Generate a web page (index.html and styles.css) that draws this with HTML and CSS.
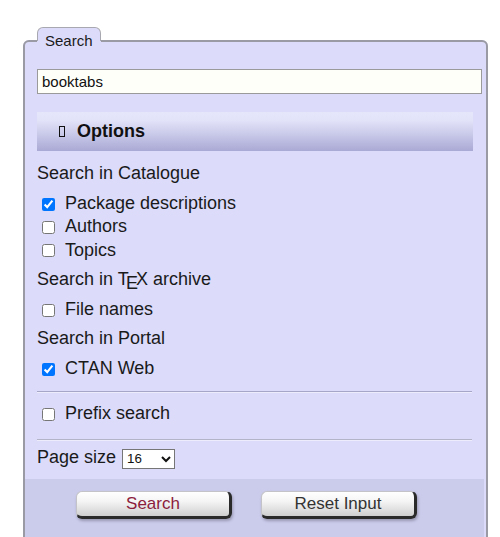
FILE: index.html
```html
<!DOCTYPE html>
<html lang="en">
<head>
    <meta charset="UTF-8">
    <meta name="viewport" content="width=device-width, initial-scale=1.0">
    <title>Search | CTAN</title>
    <link rel="stylesheet" href="styles.css">
</head>
<body>
    <form class="search-form">
        <fieldset class="search-box">
            <legend>Search</legend>

            <input type="text" class="query" name="q" value="booktabs">

            <div class="options-bar"><span class="options-icon"></span>Options</div>

            <div class="heading">Search in Catalogue</div>
            <div class="group">
                <label class="row"><input type="checkbox" name="ext" checked>Package descriptions</label>
                <label class="row"><input type="checkbox" name="aut">Authors</label>
                <label class="row"><input type="checkbox" name="top">Topics</label>
            </div>

            <div class="heading">Search in <span class="tex">T<span class="tex-e">E</span>X</span> archive</div>
            <div class="group">
                <label class="row"><input type="checkbox" name="fil">File names</label>
            </div>

            <div class="heading">Search in Portal</div>
            <div class="group">
                <label class="row"><input type="checkbox" name="por" checked>CTAN Web</label>
            </div>

            <hr class="sep">

            <div class="group">
                <label class="row"><input type="checkbox" name="prefix">Prefix search</label>
            </div>

            <hr class="sep sep-last">

            <div class="page-size">
                Page size
                <select name="max">
                    <option>8</option>
                    <option selected>16</option>
                    <option>32</option>
                    <option>64</option>
                </select>
            </div>

            <div class="buttons">
                <button type="submit" class="btn btn-search">Search</button>
                <button type="reset" class="btn">Reset Input</button>
            </div>
        </fieldset>
    </form>
</body>
</html>
```

FILE: styles.css
```css
body {
    margin: 0;
    font-family: 'Liberation Sans', Arial, sans-serif;
    color: #1a1a1a;
    background: #fff;
}

.search-form {
    margin: 0;
}

.search-box {
    box-sizing: border-box;
    width: 465px;
    min-width: 0;
    margin: 27px 0 0 23px;
    padding: 14px 4px 0 12px;
    border: 2px solid #9a9aa4;
    border-radius: 6px;
    background: #dcdcfa;
}

.search-box legend {
    padding: 4px 7px 6px;
    font-size: 15px;
    line-height: 17px;
    border: 1px solid transparent;
    border-bottom: 0;
    border-radius: 6px 6px 0 0;
    background:
        linear-gradient(#dcdcfa, #dcdcfa) padding-box,
        linear-gradient(to bottom, #a8a8b0 50%, transparent 50%) border-box;
}

.query {
    display: block;
    box-sizing: border-box;
    width: 100%;
    height: 25px;
    margin: 0;
    padding: 0 4px;
    border: 1px solid #9a9a9a;
    background: #fffffa;
    font-family: inherit;
    font-size: 15px;
    color: #111;
}

.options-bar {
    display: flex;
    align-items: center;
    gap: 12px;
    height: 39px;
    margin: 18px 9px 11px 0;
    padding-left: 22px;
    font-size: 18px;
    font-weight: bold;
    color: #111;
    background: linear-gradient(to bottom, #e6e6fb 0%, #e2e2f9 22%, #d2d2ef 45%, #a9a9d5 100%);
}

.options-icon {
    box-sizing: border-box;
    width: 6px;
    height: 11px;
    border: 1.5px solid #111;
}

.heading {
    font-size: 18px;
    line-height: 23.4px;
    margin-bottom: 6.5px;
}

.group {
    margin-bottom: 6px;
}

.row {
    display: block;
    font-size: 18px;
    line-height: 23.4px;
}

.row input {
    width: 13px;
    height: 13px;
    margin: 0 10px 0 5px;
    vertical-align: middle;
}

.tex-e {
    vertical-align: -0.22em;
    line-height: 0;
    margin: 0 -0.12em 0 -0.15em;
}

.sep {
    height: 0;
    margin: 10px 10px 9.3px 0;
    border: 0;
    border-top: 1px solid #a6a6c8;
    border-bottom: 1px solid #ececfc;
}

.sep-last {
    margin: 14px 10px 4.7px 0;
    border-top-color: #b4b4c8;
}

.page-size {
    font-size: 18px;
    line-height: 23.4px;
}

.page-size select {
    width: 53px;
    height: 20px;
    margin-left: 1px;
    font-family: inherit;
    font-size: 13.33px;
    color: #111;
    background: #fff;
}

.buttons {
    display: flex;
    gap: 29px;
    margin: 9px -2px 0 -12px;
    padding: 12px 0 30px 51px;
    background: #cbcbec;
}

.btn {
    box-sizing: border-box;
    width: 156px;
    height: 28px;
    padding: 0;
    border: 1px solid #c4c4c8;
    border-right: 3px solid #2a2a2a;
    border-bottom: 3px solid #2a2a2a;
    border-radius: 6px;
    background: linear-gradient(to bottom, #ffffff 0%, #f4f4f4 40%, #cfcfcf 100%);
    box-shadow: 1px 2px 3px rgba(0, 0, 0, 0.25);
    font-family: inherit;
    font-size: 17px;
    color: #333;
    cursor: pointer;
}

.btn-search {
    color: #8c1c3c;
}
```
